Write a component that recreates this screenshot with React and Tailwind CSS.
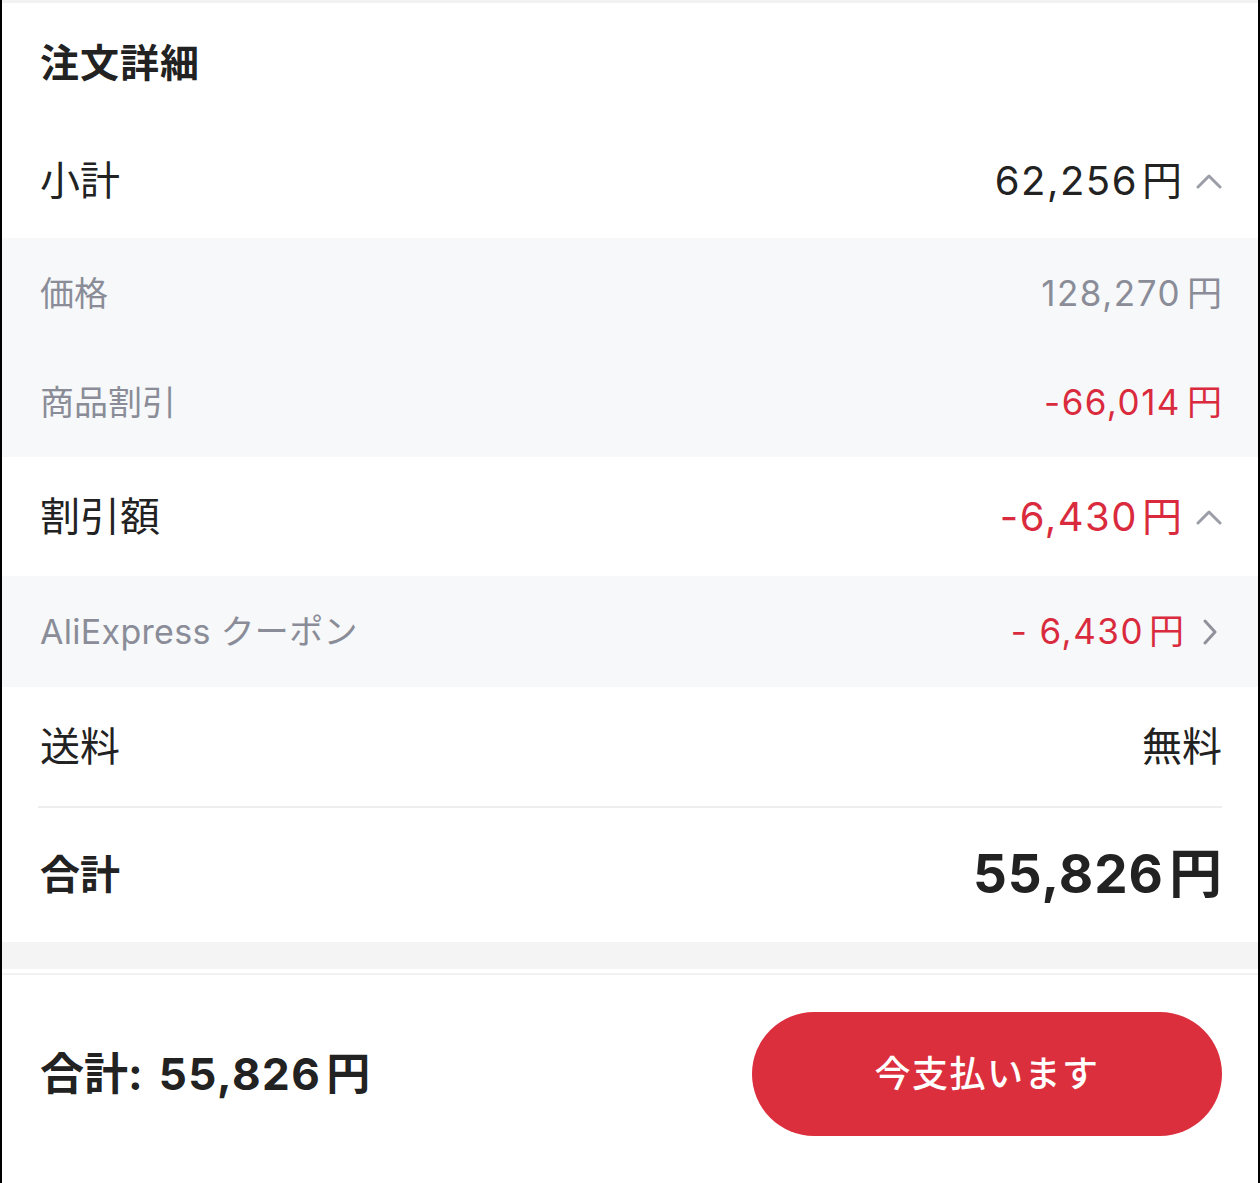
import React from "react";

const font = { fontFamily: '"Inter", "Noto Sans CJK JP", sans-serif' };

function ChevronUp() {
  return (
    <svg width="26" height="16" viewBox="0 0 26 16" className="ml-[14px]">
      <path d="M2 14 L13 3 L24 14" fill="none" stroke="#9c9ea7" strokeWidth="3" strokeLinecap="round" strokeLinejoin="round" />
    </svg>
  );
}

function ChevronRight() {
  return (
    <svg width="16" height="26" viewBox="0 0 16 26" className="ml-[18px] mr-[4px]">
      <path d="M3 2 L13 13 L3 24" fill="none" stroke="#8f929c" strokeWidth="3" strokeLinecap="round" strokeLinejoin="round" />
    </svg>
  );
}

function Yen({ amount, gap = "ml-[4px]", track = "tracking-[1.5px]" }) {
  return (
    <span className="inline-flex items-baseline">
      <span className={track}>{amount}</span>
      <span className={gap}>円</span>
    </span>
  );
}

export default function App() {
  return (
    <div className="w-[1260px] h-[1183px] bg-white border-x-2 border-black overflow-hidden text-[#222]" style={font}>
      <div className="h-[3px] bg-[#f2f2f2]" />
      <div className="h-[120px] flex items-center pl-[38px] pr-[36px]">
        <span className="text-[39px] font-bold tracking-[1px]">注文詳細</span>
      </div>
      <div className="h-[115px] flex items-center justify-between pl-[38px] pr-[36px]">
        <span className="text-[40px]">小計</span>
        <span className="flex items-center text-[40px]"><Yen amount="62,256" /><ChevronUp /></span>
      </div>
      <div className="bg-[#f7f8fa]">
        <div className="h-[110px] flex items-center justify-between pl-[38px] pr-[36px] text-[#8a8d98]">
          <span className="text-[34px]">価格</span>
          <span className="text-[35px]"><Yen amount="128,270" gap="ml-[6px]" /></span>
        </div>
        <div className="h-[109px] flex items-center justify-between pl-[38px] pr-[36px]">
          <span className="text-[34px] text-[#8a8d98]">商品割引</span>
          <span className="text-[35px] text-[#d92b3d]"><Yen amount="-66,014" gap="ml-[6px]" /></span>
        </div>
      </div>
      <div className="h-[119px] flex items-center justify-between pl-[38px] pr-[36px]">
        <span className="text-[40px]">割引額</span>
        <span className="flex items-center text-[40px] text-[#d92b3d]"><Yen amount="-6,430" /><ChevronUp /></span>
      </div>
      <div className="h-[111px] bg-[#f7f8fa] flex items-center justify-between pl-[38px] pr-[36px]">
        <span className="text-[34px] text-[#8a8d98] tracking-[0.3px]">AliExpress クーポン</span>
        <span className="flex items-center text-[35px] text-[#d92b3d]"><Yen amount="- 6,430" gap="ml-[5px]" /><ChevronRight /></span>
      </div>
      <div className="h-[119px] flex items-center justify-between pl-[38px] pr-[36px]">
        <span className="text-[40px]">送料</span>
        <span className="text-[40px]">無料</span>
      </div>
      <div className="ml-[36px] mr-[36px] h-[2px] bg-[#eeeeee]" />
      <div className="h-[134px] flex items-center justify-between pl-[38px] pr-[36px]">
        <span className="text-[40px] font-bold">合計</span>
        <span className="text-[53px] font-bold"><Yen amount="55,826" gap="ml-[5px]" track="tracking-[1px]" /></span>
      </div>
      <div className="h-[27px] bg-[#f4f4f4]" />
      <div className="h-[4px]" />
      <div className="h-[2px] bg-[#f2f2f2]" />
      <div className="flex items-start justify-between pl-[38px] pr-[36px] pt-[37px]">
        <span className="h-[124px] flex items-center text-[44px] font-bold">
          <span>合計:</span>
          <span className="ml-[16px]"><Yen amount="55,826" gap="ml-[5px]" /></span>
        </span>
        <button className="w-[470px] h-[124px] rounded-full bg-[#dc2f3e] text-white text-[36px] font-medium tracking-[1.5px] flex items-center justify-center">
          今支払います
        </button>
      </div>
    </div>
  );
}
